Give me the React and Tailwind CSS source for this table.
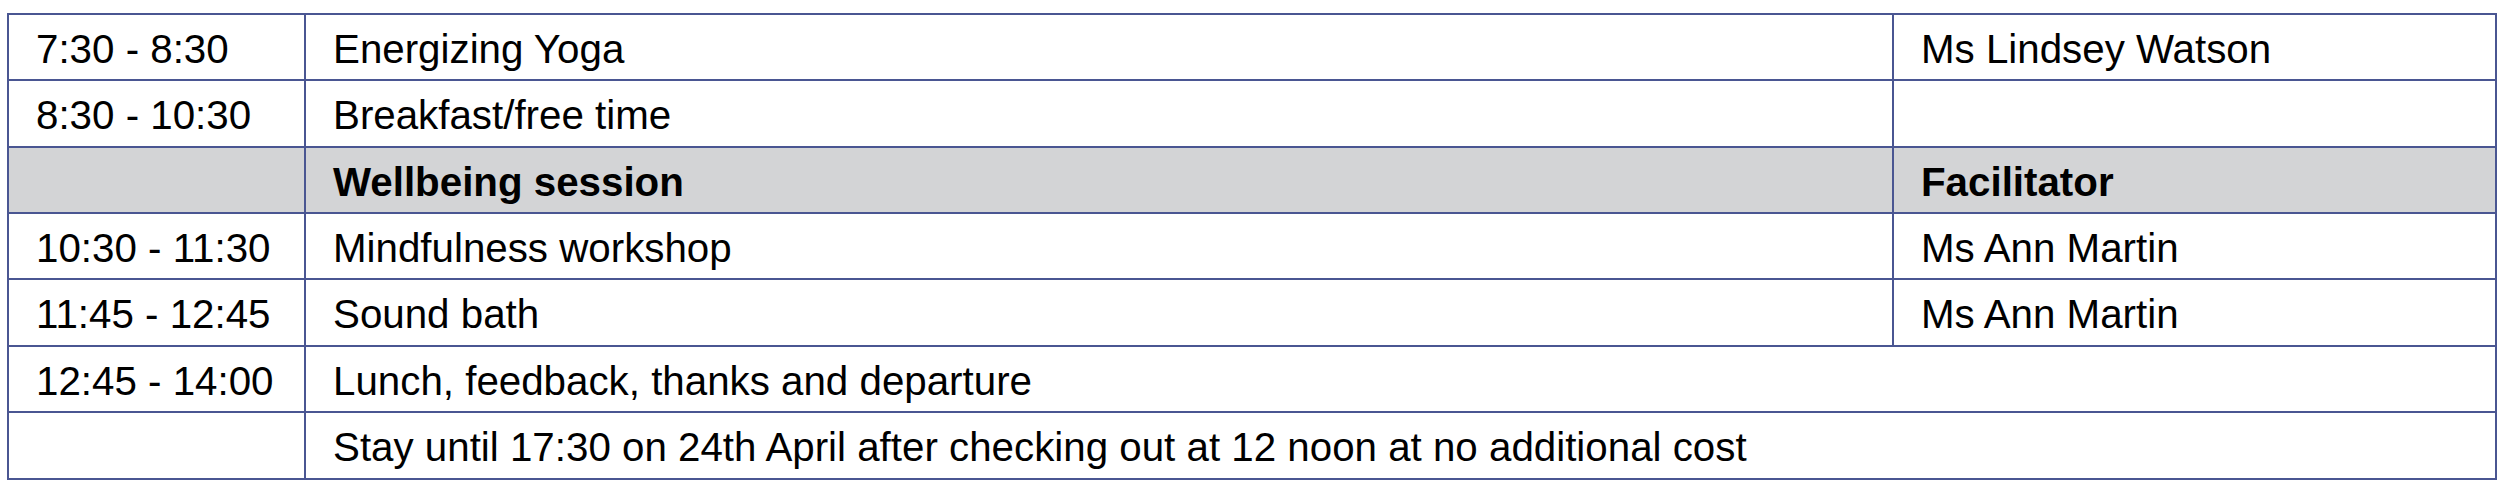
import React from "react";

const rows = [
  { t: "7:30 - 8:30", a: "Energizing Yoga", f: "Ms Lindsey Watson", h: "h-[66px]" },
  { t: "8:30 - 10:30", a: "Breakfast/free time", f: "", h: "h-[67px]" },
  { t: "", a: "Wellbeing session", f: "Facilitator", head: true, h: "h-[66px]" },
  { t: "10:30 - 11:30", a: "Mindfulness workshop", f: "Ms Ann Martin", h: "h-[66px]" },
  { t: "11:45 - 12:45", a: "Sound bath", f: "Ms Ann Martin", h: "h-[67px]" },
  { t: "12:45 - 14:00", a: "Lunch, feedback, thanks and departure", span: true, h: "h-[66px]" },
  { t: "", a: "Stay until 17:30 on 24th April after checking out at 12 noon at no additional cost", span: true, h: "h-[67px]" },
];

export default function App() {
  const cell = "border-2 border-[#4a5692] p-0 pl-[27px] pt-[6px] align-middle whitespace-nowrap";
  return (
    <div className="bg-white w-[2500px] h-[498px] pt-[13px] pl-[7px]" style={{ fontFamily: '"Liberation Sans", Arial, sans-serif' }}>
      <table className="border-collapse w-[2488px] table-fixed text-[40.3px] leading-none text-black">
        <colgroup>
          <col className="w-[297px]" />
          <col className="w-[1588px]" />
          <col className="w-[603px]" />
        </colgroup>
        <tbody>
          {rows.map((r, i) => (
            <tr key={i} className={`${r.h} ${r.head ? "bg-[#d3d4d6] font-bold" : ""}`}>
              <td className={cell}>{r.t}</td>
              {r.span ? (
                <td className={cell} colSpan={2}>{r.a}</td>
              ) : (
                <>
                  <td className={cell}>{r.a}</td>
                  <td className={cell}>{r.f}</td>
                </>
              )}
            </tr>
          ))}
        </tbody>
      </table>
    </div>
  );
}
